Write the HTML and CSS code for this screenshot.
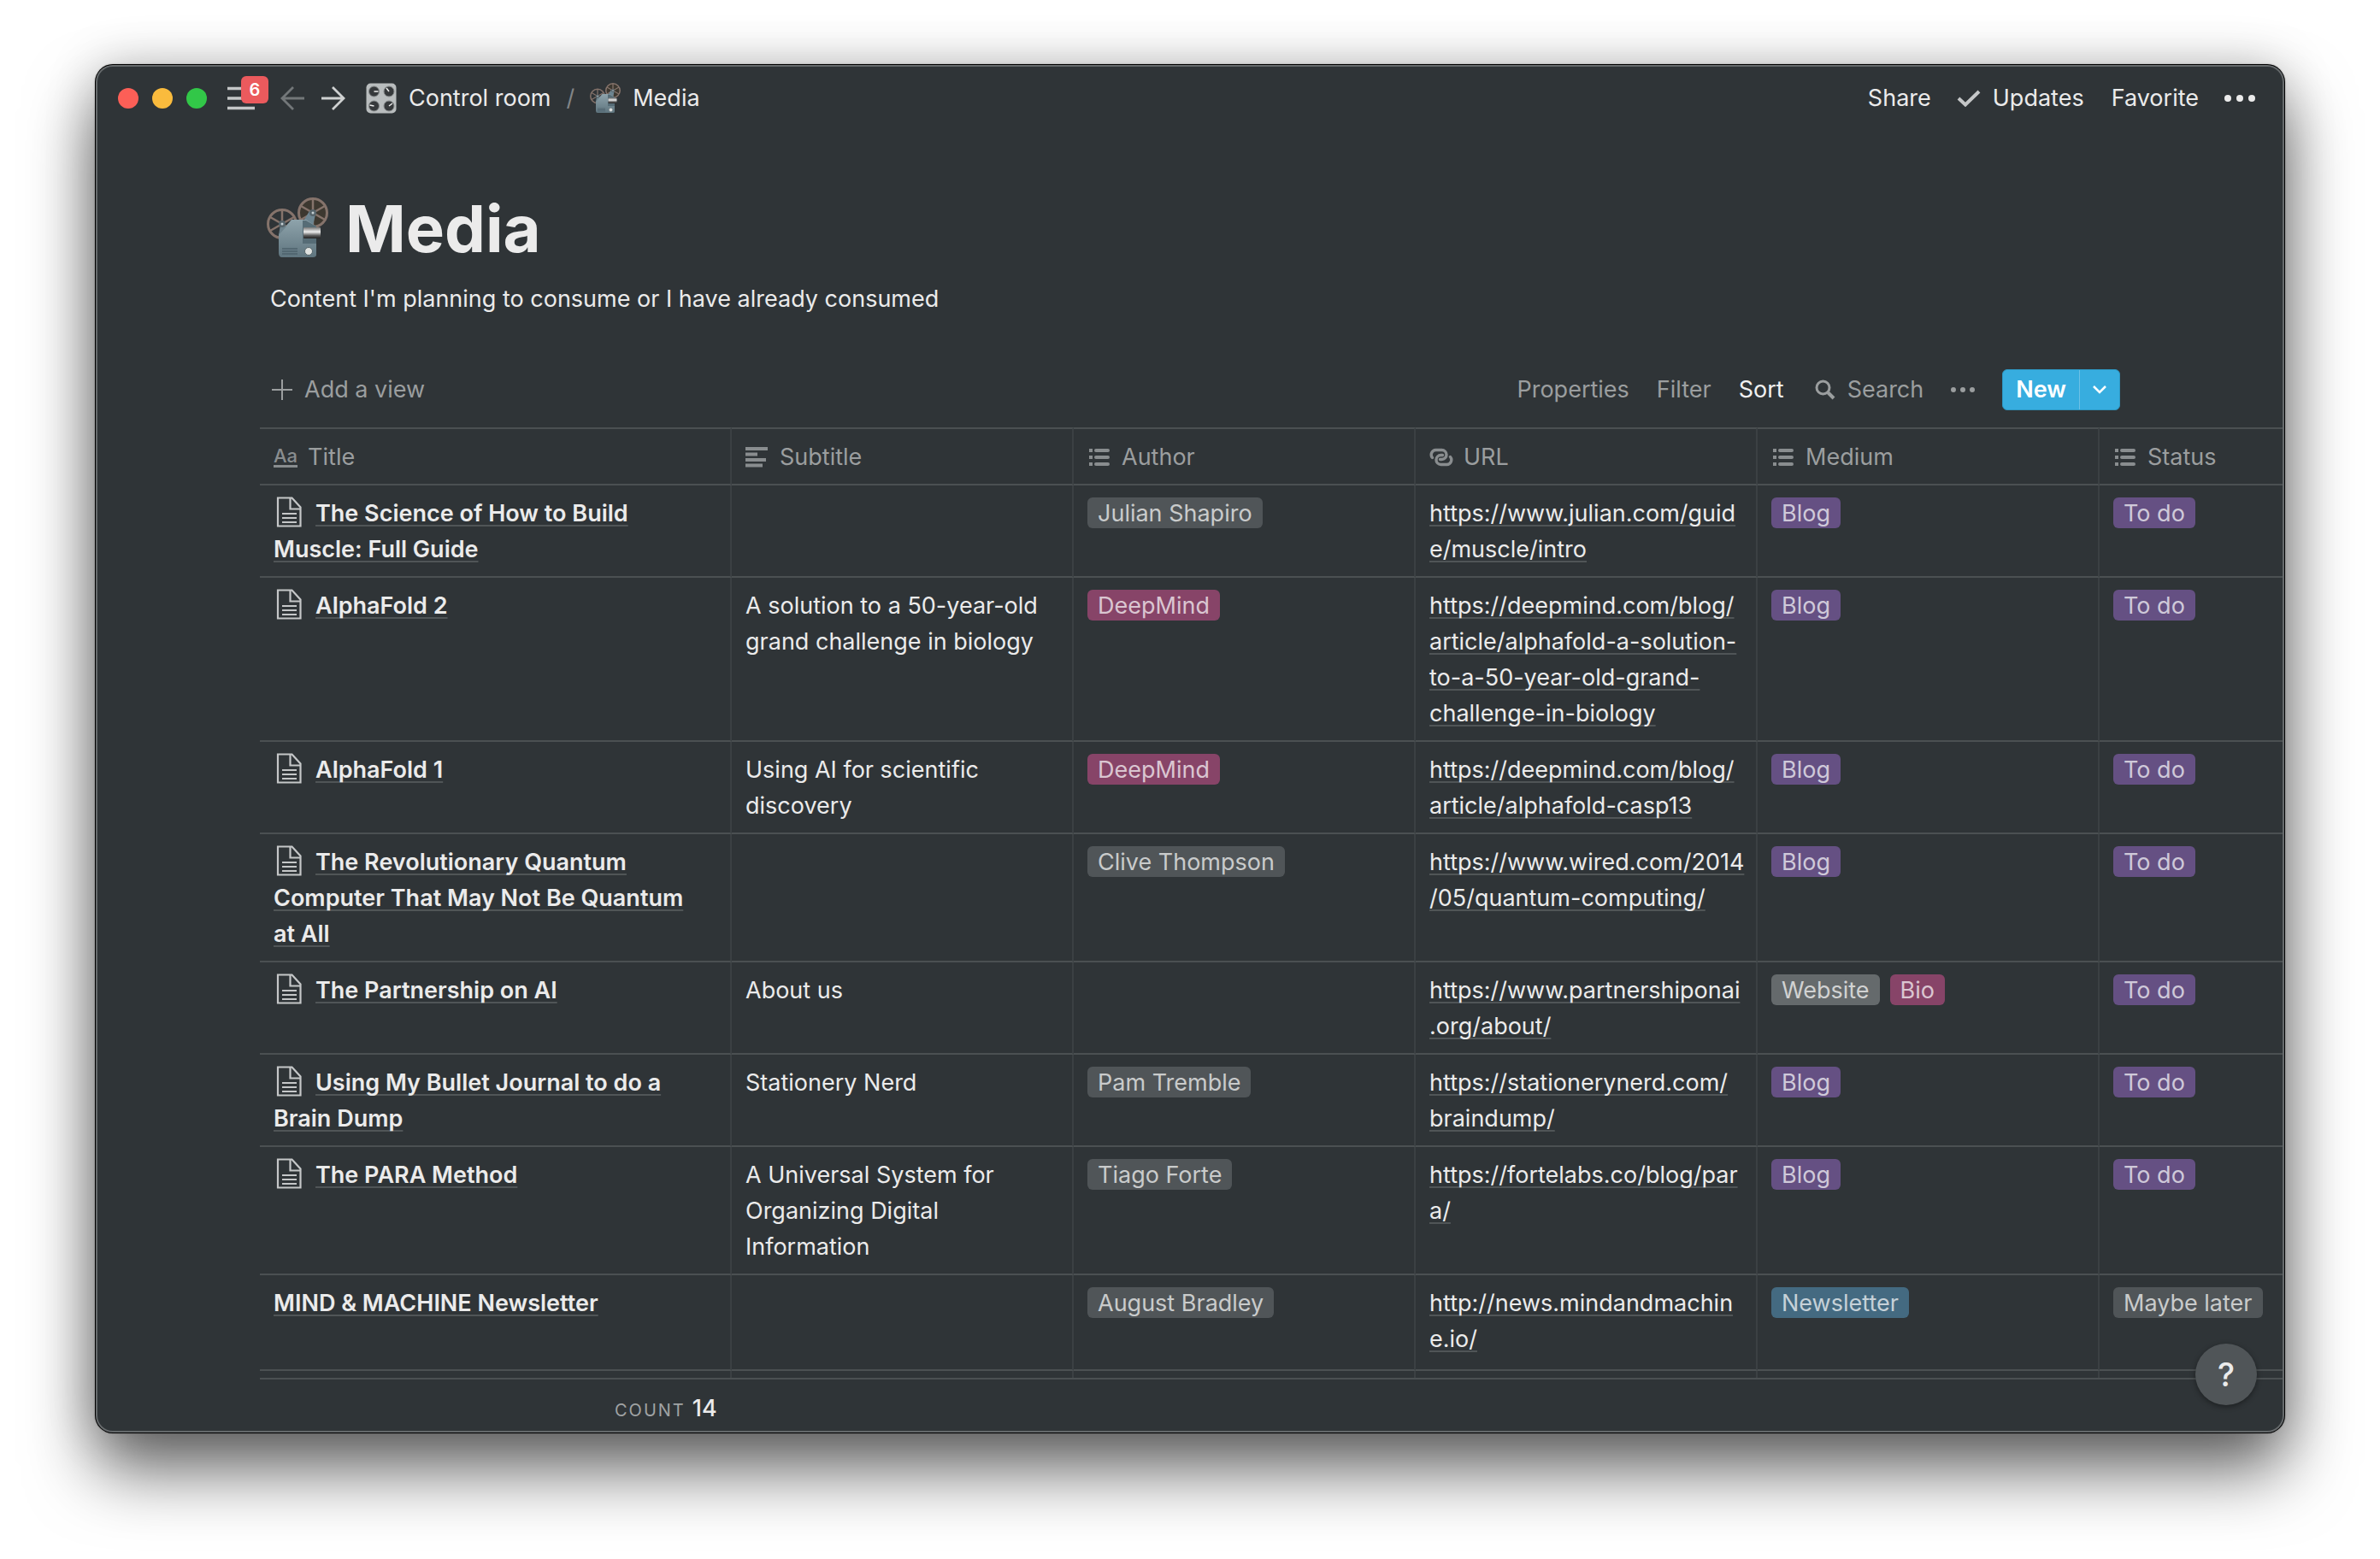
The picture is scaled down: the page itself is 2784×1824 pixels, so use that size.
FILE: index.html
```html
<!DOCTYPE html>
<html lang="en">
<head>
<meta charset="utf-8">
<title>Media</title>
<link rel="stylesheet" href="styles.css">
</head>
<body>
<svg class="defs" aria-hidden="true">
  <symbol id="i-page" viewBox="0 0 30 36"><path d="M2 1.5h16.500l10 11V34.500H2zM16.500 2v12.500H28M7 20h17M7 25h17M7 30h17" fill="none" stroke="currentColor" stroke-width="2.200"/></symbol>
  <symbol id="i-list" viewBox="0 0 28 24"><path d="M2 4h4M2 12h4M2 20h4" stroke="currentColor" stroke-width="4"/><path d="M10 4h14M10 12h14M10 20h14" stroke="currentColor" stroke-width="4" stroke-linecap="round"/></symbol>
  <symbol id="i-text" viewBox="0 0 28 24"><path d="M0 2h26M0 8.500h14M0 15h24M0 21.500h20" stroke="currentColor" stroke-width="4"/></symbol>
  <symbol id="i-link" viewBox="0 0 28 24"><g fill="none" stroke="currentColor" stroke-width="3.400" stroke-linecap="round"><path d="M3.500 12.500A5.500 5.500 0 0 1 7.500 3.500H14.500a5.500 5.500 0 0 1 0 11h-2"/><path d="M24.500 11.500A5.500 5.500 0 0 1 20.500 20.500H13.500a5.500 5.500 0 0 1 0-11h2"/></g></symbol>
  <symbol id="i-projector" viewBox="0 0 72 72">
    <defs><linearGradient id="g-body" x1="0" y1="0" x2="0" y2="1"><stop offset="0" stop-color="#8ea3ab"/><stop offset="1" stop-color="#5f757f"/></linearGradient>
    <linearGradient id="g-lens" x1="0" y1="0" x2="0" y2="1"><stop offset="0" stop-color="#777"/><stop offset=".4" stop-color="#eee"/><stop offset=".75" stop-color="#555"/><stop offset="1" stop-color="#222"/></linearGradient></defs>
    <g fill="none" stroke="#85736b"><circle cx="54" cy="18" r="16.500" fill="#3d3830" stroke-width="3"/><path d="M54 2v32M40 10l28 16M40 26l28-16" stroke-width="2.500"/><circle cx="18" cy="31" r="16.500" stroke-width="3"/><path d="M18 15v32M4 23l28 16M4 39l28-16" stroke-width="2.500"/></g>
    <path d="M50 16l7 4-3 13 4 5h-14l-2-9z" fill="#6d8591"/>
    <path d="M14 43l15-17h17l12 8v33q0 3-4 3H18q-4 0-4-5z" fill="url(#g-body)"/>
    <path d="M42 27h4l12 7v20H42z" fill="#566c76"/>
    <rect x="43" y="35" width="20" height="13" rx="1" fill="url(#g-lens)"/>
    <path d="M14 44l2-12 5 1 2 1z" fill="#6d838d"/>
    <path d="M18 60h18M18 63h18M18 66h18" stroke="#4d626c" stroke-width="1.500"/>
    <circle cx="49" cy="63" r="4.500" fill="#dfe2e0" stroke="#56656b"/>
    <circle cx="18" cy="31" r="4" fill="#56646b"/><circle cx="54" cy="18" r="4" fill="#56646b"/><circle cx="18" cy="31" r="1.500" fill="#c5d0d4"/><circle cx="54" cy="18" r="1.500" fill="#c5d0d4"/>
  </symbol>
</svg>

<main class="window">
  <header class="topbar">
    <div class="lights"><span class="light light-red"></span><span class="light light-yellow"></span><span class="light light-green"></span></div>
    <button class="menu" aria-label="Menu"><svg width="32" height="28" viewBox="0 0 32 28"><path d="M0 2.500h32M0 14h32M0 25.500h32" stroke="currentColor" stroke-width="3.500"/></svg><span class="badge">6</span></button>
    <nav class="history">
      <button class="dim" aria-label="Back"><svg width="28" height="28" viewBox="0 0 28 28"><path d="M28 14H2M15 1L2 14l13 13" fill="none" stroke="currentColor" stroke-width="2.800"/></svg></button>
      <button aria-label="Forward"><svg width="28" height="28" viewBox="0 0 28 28"><path d="M0 14h26M13 1l13 13-13 13" fill="none" stroke="currentColor" stroke-width="2.800"/></svg></button>
    </nav>
    <nav class="crumbs">
      <a href="#"><svg width="36" height="36" viewBox="0 0 36 36"><rect x=".5" y=".5" width="35" height="35" rx="5" fill="#b9bdbe"/><g fill="#36393b" stroke="#85898a" stroke-width="1"><circle cx="9.500" cy="10" r="6"/><circle cx="27" cy="10" r="6"/><circle cx="9.500" cy="27" r="6"/><circle cx="27" cy="27" r="6"/></g><path d="M9.500 10h5M27 10l-3-4M9.500 27l-5-1M27 27l4-3" stroke="#eee" stroke-width="1.500"/></svg>Control room</a>
      <span class="slash">/</span>
      <a href="#"><svg width="36" height="36"><use href="#i-projector"/></svg>Media</a>
    </nav>
    <div class="actions">
      <button>Share</button>
      <button class="updates"><svg width="28" height="20" viewBox="0 0 28 20"><path d="M2 10l8 7.500L26 2" fill="none" stroke="currentColor" stroke-width="4"/></svg>Updates</button>
      <button>Favorite</button>
      <button aria-label="More"><svg width="36" height="8" viewBox="0 0 36 8" fill="currentColor"><circle cx="4" cy="4" r="4"/><circle cx="18" cy="4" r="4"/><circle cx="32" cy="4" r="4"/></svg></button>
    </div>
  </header>

  <section class="intro">
    <h1><svg width="72" height="72"><use href="#i-projector"/></svg>Media</h1>
    <p>Content I'm planning to consume or I have already consumed</p>
  </section>

  <div class="toolbar">
    <button class="add"><svg width="24" height="24" viewBox="0 0 24 24"><path d="M12 0v24M0 12h24" stroke="currentColor" stroke-width="2"/></svg>Add a view</button>
    <div class="tools">
      <button>Properties</button>
      <button>Filter</button>
      <button class="active">Sort</button>
      <button class="search"><svg width="24" height="24" viewBox="0 0 24 24"><circle cx="9.500" cy="9.500" r="7.500" fill="none" stroke="currentColor" stroke-width="3"/><path d="M15 15l7 7" stroke="currentColor" stroke-width="4"/></svg>Search</button>
      <button aria-label="More options"><svg width="28" height="6" viewBox="0 0 28 6" fill="currentColor"><circle cx="3" cy="3" r="3"/><circle cx="14" cy="3" r="3"/><circle cx="25" cy="3" r="3"/></svg></button>
      <div class="split"><button class="new">New</button><button class="drop" aria-label="New options"><svg width="16" height="10" viewBox="0 0 16 10"><path d="M1 1l7 7 7-7" fill="none" stroke="currentColor" stroke-width="2.500"/></svg></button></div>
    </div>
  </div>

  <div class="grid">
    <table>
      <colgroup><col class="col-title"><col><col><col><col><col></colgroup>
      <thead><tr>
        <th><div class="head"><span class="aa" aria-hidden="true">Aa</span>Title</div></th>
        <th><div class="head"><svg width="28" height="24"><use href="#i-text"/></svg>Subtitle</div></th>
        <th><div class="head"><svg width="28" height="24"><use href="#i-list"/></svg>Author</div></th>
        <th><div class="head"><svg width="28" height="24"><use href="#i-link"/></svg>URL</div></th>
        <th><div class="head"><svg width="28" height="24"><use href="#i-list"/></svg>Medium</div></th>
        <th><div class="head"><svg width="28" height="24"><use href="#i-list"/></svg>Status</div></th>
      </tr></thead>
      <tbody>
        <tr><td><svg class="page" width="30" height="36"><use href="#i-page"/></svg><a class="name" href="#">The Science of How to Build Muscle: Full Guide</a></td><td></td><td><span class="tag">Julian Shapiro</span></td><td><a href="#">https://www.julian.com/guid<br>e/muscle/intro</a></td><td><span class="tag purple">Blog</span></td><td><span class="tag purple">To do</span></td></tr>
        <tr><td><svg class="page" width="30" height="36"><use href="#i-page"/></svg><a class="name" href="#">AlphaFold 2</a></td><td>A solution to a 50-year-old grand challenge in biology</td><td><span class="tag pink">DeepMind</span></td><td><a href="#">https://deepmind.com/blog/<br>article/alphafold-a-solution-<br>to-a-50-year-old-grand-<br>challenge-in-biology</a></td><td><span class="tag purple">Blog</span></td><td><span class="tag purple">To do</span></td></tr>
        <tr><td><svg class="page" width="30" height="36"><use href="#i-page"/></svg><a class="name" href="#">AlphaFold 1</a></td><td>Using AI for scientific discovery</td><td><span class="tag pink">DeepMind</span></td><td><a href="#">https://deepmind.com/blog/<br>article/alphafold-casp13</a></td><td><span class="tag purple">Blog</span></td><td><span class="tag purple">To do</span></td></tr>
        <tr><td><svg class="page" width="30" height="36"><use href="#i-page"/></svg><a class="name" href="#">The Revolutionary Quantum Computer That May Not Be Quantum at All</a></td><td></td><td><span class="tag">Clive Thompson</span></td><td><a href="#">https://www.wired.com/2014<br>/05/quantum-computing/</a></td><td><span class="tag purple">Blog</span></td><td><span class="tag purple">To do</span></td></tr>
        <tr><td><svg class="page" width="30" height="36"><use href="#i-page"/></svg><a class="name" href="#">The Partnership on AI</a></td><td>About us</td><td></td><td><a href="#">https://www.partnershiponai<br>.org/about/</a></td><td><span class="tag light-gray">Website</span><span class="tag pink">Bio</span></td><td><span class="tag purple">To do</span></td></tr>
        <tr><td><svg class="page" width="30" height="36"><use href="#i-page"/></svg><a class="name" href="#">Using My Bullet Journal to do a Brain Dump</a></td><td>Stationery Nerd</td><td><span class="tag">Pam Tremble</span></td><td><a href="#">https://stationerynerd.com/<br>braindump/</a></td><td><span class="tag purple">Blog</span></td><td><span class="tag purple">To do</span></td></tr>
        <tr><td><svg class="page" width="30" height="36"><use href="#i-page"/></svg><a class="name" href="#">The PARA Method</a></td><td>A Universal System for Organizing Digital Information</td><td><span class="tag">Tiago Forte</span></td><td><a href="#">https://fortelabs.co/blog/par<br>a/</a></td><td><span class="tag purple">Blog</span></td><td><span class="tag purple">To do</span></td></tr>
        <tr class="tall"><td><a class="name" href="#">MIND &amp; MACHINE Newsletter</a></td><td></td><td><span class="tag">August Bradley</span></td><td><a href="#">http://news.mindandmachin<br>e.io/</a></td><td><span class="tag blue">Newsletter</span></td><td><span class="tag">Maybe later</span></td></tr>
        <tr><td></td><td></td><td></td><td></td><td></td><td></td></tr>
      </tbody>
    </table>
  </div>

  <footer class="totals"><span class="count">COUNT</span><span>14</span></footer>
  <button class="help" aria-label="Help">?</button>
</main>
</body>
</html>
```

FILE: styles.css
```css
* { box-sizing: border-box; }

body {
  margin: 0;
  height: 100vh;
  padding: 76px 112px 148px;
  display: flex;
  background: #fff;
  color: #ebebeb;
  font: 27px/42px Inter, "Liberation Sans", sans-serif;
}

.defs { position: absolute; width: 0; height: 0; }
svg { flex: none; }

button {
  display: flex;
  align-items: center;
  padding: 0;
  border: 0;
  background: none;
  color: inherit;
  font: inherit;
}

a { color: inherit; text-decoration: none; }

.window {
  position: relative;
  flex: 1;
  min-width: 0;
  display: flex;
  flex-direction: column;
  overflow: hidden;
  border-radius: 20px;
  background: #2f3437;
  box-shadow: 0 0 0 1px #000, 0 0 2px 1px rgba(0, 0, 0, .3), 0 44px 80px rgba(0, 0, 0, .6), 0 0 60px rgba(0, 0, 0, .2);
}

/* light rim drawn over the content */
.window::after {
  content: "";
  position: absolute;
  inset: 0;
  border: 2px solid #65696b;
  border-radius: 20px;
  pointer-events: none;
}

.topbar {
  display: flex;
  align-items: center;
  height: 77px;
  padding: 0 34px 0 26px;
}

.lights { display: flex; gap: 16px; }
.light { width: 24px; height: 24px; border-radius: 50%; }
.light-red { background: #fc5f57; }
.light-yellow { background: #fabb3d; }
.light-green { background: #32c748; }

.menu { position: relative; margin-left: 24px; color: #c5c7c8; }
.badge {
  position: absolute;
  left: 16px;
  top: -12px;
  width: 32px;
  height: 32px;
  border-radius: 6px;
  background: #eb5a5d;
  color: #fff;
  font-size: 20px;
  font-weight: 600;
  line-height: 32px;
  text-align: center;
}

.history { display: flex; gap: 20px; margin-left: 30px; color: #cfd1d1; }
.dim { color: #737779; }

.crumbs { display: flex; align-items: center; gap: 18px; margin-left: 24px; }
.crumbs a { display: flex; align-items: center; gap: 14px; }
.slash { color: #828587; }

.actions { display: flex; align-items: center; gap: 30px; margin-left: auto; }
.updates { gap: 14px; margin-right: 2px; }
.updates svg { color: #c5c7c8; }

.intro { padding: 72px 200px 0; }
h1 {
  display: flex;
  align-items: center;
  gap: 20px;
  margin: 0;
  font-size: 76px;
  font-weight: 700;
  line-height: 84px;
}
.intro p { margin: 20px 0 0; padding-left: 4px; }

.toolbar {
  display: flex;
  align-items: center;
  justify-content: space-between;
  margin: 61px 192px 20px 206px;
  color: #9b9e9f;
}
.add { gap: 14px; }
.tools { display: flex; align-items: center; gap: 32px; }
.search { gap: 14px; margin-left: 4px; }
.active { color: #f1f1f1; }
.split {
  display: flex;
  height: 48px;
  border: 1px solid #2e98c4;
  border-radius: 6px;
  overflow: hidden;
  background: #37addf;
  color: #fff;
}
.new { padding: 0 15px; font-weight: 600; }
.drop { padding: 0 15px; border-left: 1px solid #6cc1e6; }

.grid { flex: 1; min-height: 0; margin-left: 192px; overflow: hidden; }
table { width: 2552px; table-layout: fixed; border-collapse: separate; border-spacing: 0; }
col { width: 400px; }
.col-title { width: 552px; }

th, td {
  border-right: 2px solid #3b4043;
  border-bottom: 2px solid #4b5052;
  padding: 12px 8px 10px 16px;
  text-align: left;
  vertical-align: top;
  font-weight: 400;
}
td:first-child { padding-right: 32px; }
th { border-top: 2px solid #4b5052; color: #9b9e9f; }
.head { display: flex; align-items: center; gap: 12px; }
.head svg, .aa { color: #898d8f; }
.aa {
  height: 24px;
  border-bottom: 3px solid currentColor;
  font-size: 22px;
  font-weight: 500;
  line-height: 20px;
}

td a {
  text-decoration: underline 2px #505557;
  text-decoration-skip-ink: none;
  text-underline-offset: 4px;
}
.name { font-weight: 600; }
.page { margin: 0 16px 0 3px; vertical-align: -7px; color: #c5c7c8; }
.tall td { padding-bottom: 14px; }

.tag {
  display: inline-block;
  height: 36px;
  margin: 2px 12px 4px 0;
  padding: 0 12px;
  border-radius: 6px;
  background: #505558;
  color: #c9cbcb;
  line-height: 37px;
  vertical-align: top;
}
.purple { background: #655083; color: #cfc9d9; }
.pink { background: #874468; color: #dac6d1; }
.blue { background: #446a81; color: #c6d1d8; }
.light-gray { background: #656a6c; color: #d1d2d2; }

.totals {
  display: flex;
  align-items: baseline;
  gap: 8px;
  margin-left: 192px;
  padding: 13px 0 7px 415px;
  border-top: 2px solid #4b5052;
  font-weight: 500;
}
.count { color: #a0a3a4; font-size: 20px; font-weight: 400; line-height: 24px; letter-spacing: 2px; }

.help {
  position: absolute;
  right: 32px;
  bottom: 32px;
  width: 72px;
  height: 72px;
  justify-content: center;
  border-radius: 50%;
  background: #505558;
  box-shadow: 0 2px 6px rgba(0, 0, 0, .4);
  font-size: 38px;
  font-weight: 500;
}
```
